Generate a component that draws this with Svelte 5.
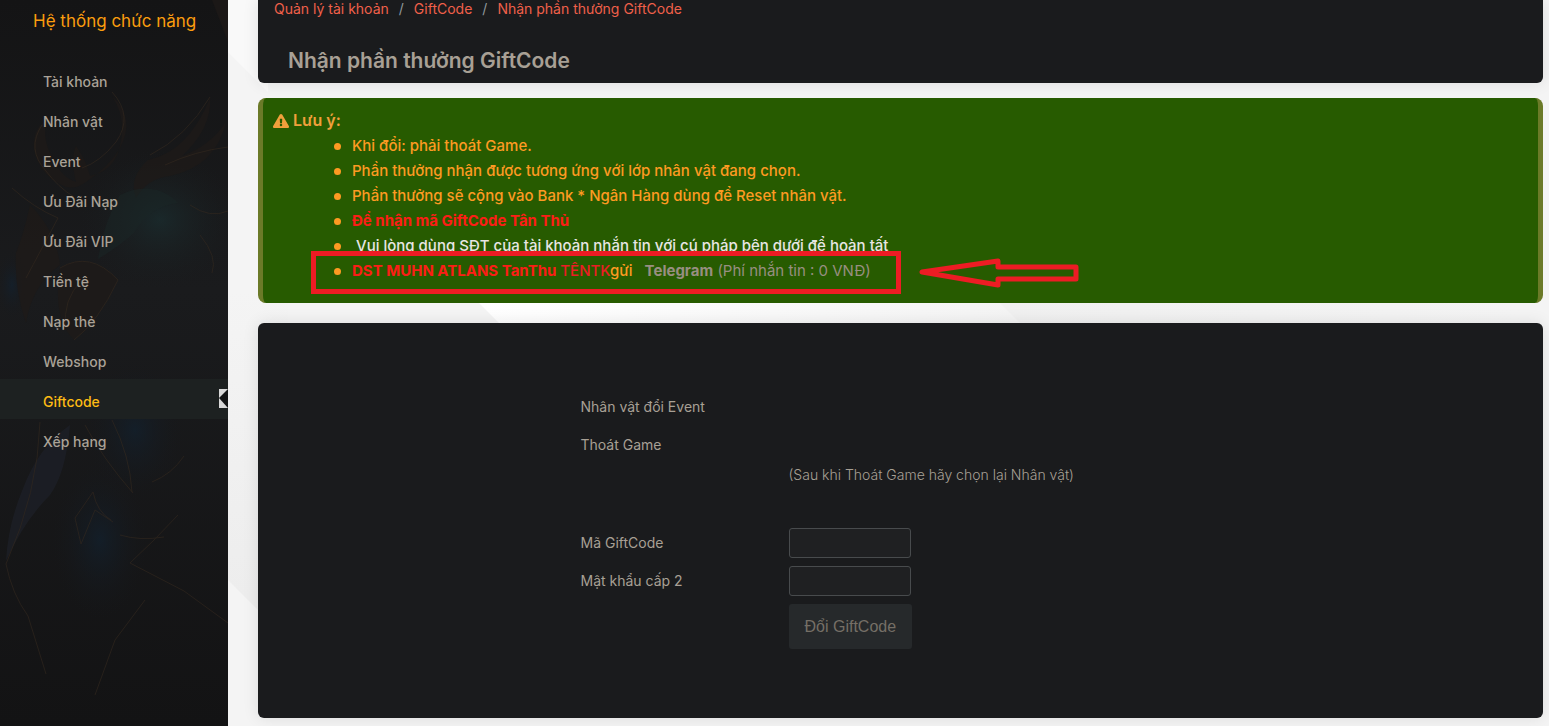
<script lang="ts">
	const menu = ['Tài khoản', 'Nhân vật', 'Event', 'Ưu Đãi Nạp', 'Ưu Đãi VIP', 'Tiền tệ', 'Nạp thẻ', 'Webshop', 'Giftcode', 'Xếp hạng']
	const crumbs = ['Quản lý tài khoản', 'GiftCode', 'Nhận phần thưởng GiftCode']

	let active = $state('Giftcode')
	let code = $state('')
	let password = $state('')
</script>

<div class="page">
	<aside class="sidebar">
		<svg class="art" viewBox="0 0 228 726" preserveAspectRatio="xMidYMin slice" aria-hidden="true">
			<defs>
				<radialGradient id="teal">
					<stop offset="0" stop-color="#1b3234" stop-opacity=".6"/>
					<stop offset="1" stop-color="#1a1d1f" stop-opacity="0"/>
				</radialGradient>
				<radialGradient id="blue">
					<stop offset="0" stop-color="#12212f" stop-opacity=".7"/>
					<stop offset="1" stop-color="#17181b" stop-opacity="0"/>
				</radialGradient>
				<linearGradient id="base" x2="0" y2="1">
					<stop offset="0" stop-color="#141415"/>
					<stop offset=".4" stop-color="#1a1b1d"/>
					<stop offset="1" stop-color="#131314"/>
				</linearGradient>
			</defs>
			<rect width="228" height="726" fill="url(#base)"/>
			<ellipse cx="160" cy="220" rx="80" ry="70" fill="url(#teal)"/>
			<ellipse cx="100" cy="540" rx="48" ry="80" fill="url(#blue)"/>
			<ellipse cx="12" cy="285" rx="16" ry="34" fill="url(#blue)"/>
			<ellipse cx="135" cy="430" rx="50" ry="70" fill="url(#blue)"/>
			<g fill="#1f1a18" opacity=".7">
				<path d="M34 150q-2-20 12-30q-4 22 8 40q8 18 22 22q-6-24 0-36q10 14 14 30q30-6 32-44q1-20-10-36q24 22 8 52q-10 18-34 34q-14 10-26 2q-20-10-26-34z"/>
				<path d="M148 160q40-8 62-62q2 30-28 58q28-10 44-34q-10 44-56 54q-22 2-34 22q-8-20 12-38z"/>
				<path d="M30 205q26 26 30 60q-28 20-34 58q-12-34-10-70q8-20 14-48z"/>
				<path d="M212 0l16 42v-42z"/>
				<path d="M60 268q30-18 58 12q-20 42-44 60q-22-22-14-72z"/>
			</g>
			<path d="M70 425q-32 22-48 66q-14 34-16 70q18-40 44-66q16-22 20-70z" fill="#1d1f27" opacity=".8"/>
			<path d="M120 195q34-16 58 8q-30 4-44 30q-16 14-36 26q6-38 22-64z" fill="#192526" opacity=".5"/>
			<g fill="none" stroke="#34291f" opacity=".6">
				<path d="M42 125q-16 24 4 46q12 16 28 26M112 92q22 24 4 50q-16 20-34 26"/>
				<path d="M12 188q22 20 46 30M58 218q-18 34-32 60"/>
				<path d="M150 155q36-18 60-58M165 165q30-14 63-18M190 205q20 14 38 6M200 235q18 22 12 38"/>
				<path d="M60 268q30-18 58 12q-20 42-44 60M82 280q-20 20-16 48"/>
				<path d="M85 425q18 34 48 68M112 420q18 36 20 72M184 456q-12 18-32 26"/>
				<path d="M40 422q-2 70-34 142q6 30 22 52l18 58M93 492l-18 26l6 26l14-34l18 12M93 492q4 20 18 28"/>
				<path d="M178 515q-24 26-48 48l54 28l44 32M120 535q20 6 44 2M145 600l-30 40l-20 55"/>
			</g>
		</svg>
		<h2>Hệ thống chức năng</h2>
		<nav>
			{#each menu as item}
				<a href="#top" class:active={item === active} onclick={(e) => { e.preventDefault(); active = item }}>{item}</a>
			{/each}
		</nav>
	</aside>

	<main>
		<svg class="backdrop" viewBox="0 0 1321 726" preserveAspectRatio="xMinYMin slice" aria-hidden="true">
			<defs>
				<linearGradient id="shine">
					<stop offset="0" stop-color="#ffffff"/>
					<stop offset="1" stop-color="#f4f4f4"/>
				</linearGradient>
				<linearGradient id="fade">
					<stop offset="0" stop-color="#f0f0f0"/>
					<stop offset="1" stop-color="#f4f4f4"/>
				</linearGradient>
				<linearGradient id="shade" x2="0" y2="1">
					<stop offset="0" stop-color="#f4f4f4"/>
					<stop offset="1" stop-color="#ececec"/>
				</linearGradient>
			</defs>
			<path d="M0 0h40v92L0 52z" fill="#f9f9f9"/>
			<path d="M0 290h60v350L0 580z" fill="url(#shade)"/>
			<path d="M251 303h521l20 20H271z" fill="url(#shine)"/>
			<path d="M772 303h520v20H792z" fill="url(#fade)"/>
		</svg>

		<header class="card head">
			<nav class="crumbs" aria-label="breadcrumb">
				{#each crumbs as crumb}
					<a href="#top">{crumb}</a>
				{/each}
			</nav>
			<h1>Nhận phần thưởng GiftCode</h1>
		</header>

		<section class="note">
			<div class="note-title">
				<svg width="16" height="16" viewBox="0 0 576 512" aria-hidden="true">
					<path fill="currentColor" d="M570 440c18 32-5 72-42 72H48c-37 0-60-40-42-72L246 24c19-32 65-32 84 0l240 416zM288 354a46 46 0 1 0 0 92 46 46 0 0 0 0-92zm-44-165 8 136c0 6 5 11 12 11h48c7 0 12-5 12-11l8-136c0-7-5-13-12-13h-64c-7 0-12 6-12 13z"/>
				</svg>
				Lưu ý:
			</div>
			<ul>
				<li>Khi đổi: phải thoát Game.</li>
				<li>Phần thưởng nhận được tương ứng với lớp nhân vật đang chọn.</li>
				<li>Phần thưởng sẽ cộng vào Bank * Ngân Hàng dùng để Reset nhân vật.</li>
				<li><b class="red">Để nhận mã GiftCode Tân Thủ</b></li>
				<li class="white">&nbsp;Vui lòng dùng SĐT của tài khoản nhắn tin với cú pháp bên dưới để hoàn tất</li>
				<li>
					<b class="red">DST MUHN ATLANS TanThu</b> <span class="name">TÊNTK</span>gửi &nbsp;
					<span class="grey"><b>Telegram</b> (Phí nhắn tin : 0 VNĐ)</span>
					<span class="frame"></span>
					<svg class="pointer" width="160" height="30" viewBox="0 0 160 30" aria-hidden="true">
						<path d="M3 14L79 3v6h78v12H79v6z" fill="none" stroke="#ed1c24" stroke-width="5" stroke-linejoin="round"/>
					</svg>
				</li>
			</ul>
		</section>

		<section class="card body">
			<form onsubmit={(e) => e.preventDefault()}>
				<span class="label">Nhân vật đổi Event</span>
				<span class="label">Thoát Game</span>
				<p>(Sau khi Thoát Game hãy chọn lại Nhân vật)</p>
				<label for="code">Mã GiftCode</label>
				<input id="code" type="text" bind:value={code}/>
				<label for="password">Mật khẩu cấp 2</label>
				<input id="password" type="password" bind:value={password}/>
				<button type="submit">Đổi GiftCode</button>
			</form>
		</section>
	</main>
</div>

<style>
	:global(body) {
		background: #f4f4f4;
		font-family: Inter, "Noto Sans", sans-serif;
		font-size: 14px;
		color: #a8a095;
	}

	.page {
		display: flex;
		min-height: 100vh;
	}

	.sidebar {
		position: relative;
		flex: 0 0 228px;
		background: #161617;
		overflow: hidden;
	}

	.art,
	.backdrop {
		position: absolute;
		inset: 0;
		width: 100%;
		height: 100%;
	}

	h2 {
		position: relative;
		margin: 0;
		padding: 9px 0 0 33px;
		font-size: 17px;
		font-weight: 400;
		line-height: 24px;
		color: #fb9d0e;
	}

	.sidebar nav {
		position: relative;
		padding-top: 26px;
	}

	.sidebar nav a {
		display: block;
		position: relative;
		padding: 6px 0 0 43px;
		font-weight: 500;
		line-height: 34px;
		color: #aaa297;
		text-decoration: none;
	}

	.sidebar nav a.active {
		background: #1d2121;
		color: #fdbb14;
	}

	.sidebar nav a.active::after {
		content: "";
		position: absolute;
		top: 10px;
		right: 0;
		width: 9px;
		height: 19px;
		background: #d8d8d8;
	}

	.sidebar nav a.active::before {
		content: "";
		position: absolute;
		z-index: 1;
		top: 10px;
		right: 0;
		border: solid transparent;
		border-width: 9px 9px 10px 0;
		border-right-color: #131415;
	}

	main {
		position: relative;
		flex: 1;
		min-width: 0;
		padding: 0 6px 8px 30px;
	}

	.card {
		position: relative;
		background: #1a1b1d;
		border-radius: 6px;
		box-shadow: 0 0 16px rgba(0, 0, 0, .1);
	}

	.head {
		padding: 0 16px 10px;
		border-radius: 0 0 6px 6px;
	}

	.crumbs {
		display: flex;
		line-height: 18px;
	}

	.crumbs a {
		color: #f0604a;
		text-decoration: none;
	}

	.crumbs a + a::before {
		content: "/";
		padding: 0 10px;
		color: #90989c;
	}

	h1 {
		margin: 0;
		padding: 31px 0 0 14px;
		font-size: 21px;
		font-weight: 600;
		line-height: 24px;
	}

	.note {
		position: relative;
		margin: 15px 0 20px;
		padding: 10px 10px 20px;
		background: #275b00;
		border: solid #6b7a28;
		border-width: 0 5px;
		border-radius: 8px;
		font-size: 15px;
		font-weight: 500;
		line-height: 25px;
		color: #fd9a22;
	}

	.note-title {
		display: flex;
		align-items: center;
		gap: 4px;
		font-size: 16px;
		font-weight: 600;
		color: #f0a03c;
	}

	ul {
		margin: 0;
		padding: 0 0 0 79px;
		list-style: none;
	}

	li {
		position: relative;
	}

	li::before {
		content: "";
		position: absolute;
		top: 10px;
		left: -18px;
		width: 7px;
		height: 7px;
		border-radius: 50%;
		background: #fd9a22;
	}

	.red {
		color: #fc1d16;
	}

	.white {
		color: #e8e6e3;
	}

	.name {
		color: #ed1c24;
	}

	.grey {
		color: #988f81;
		font-weight: 400;
	}

	.frame {
		position: absolute;
		top: -7px;
		left: -41px;
		width: 580px;
		height: 33px;
		border: 5px solid #ed1c24;
	}

	.pointer {
		position: absolute;
		top: 0;
		left: 567px;
	}

	.body {
		padding: 69px 20px;
	}

	form {
		display: grid;
		grid-template-columns: 208px 1fr;
		row-gap: 8px;
		max-width: 640px;
		margin: 0 auto;
		line-height: 30px;
	}

	label,
	.label {
		grid-column: 1;
	}

	p {
		grid-column: 1 / -1;
		margin: -8px 0 30px 208px;
		font-weight: 300;
	}

	input {
		box-sizing: border-box;
		width: 122px;
		height: 30px;
		padding: 4px 8px;
		background: #1f2022;
		border: 1px solid #484b4d;
		border-radius: 3px;
		color: #a8a095;
	}

	button {
		grid-column: 2;
		justify-self: start;
		padding: 0 16px;
		background: #26292b;
		border: 0;
		border-radius: 3px;
		font-family: "Liberation Sans", Arial, sans-serif;
		font-size: 16px;
		line-height: 45px;
		color: #756f66;
	}
</style>
